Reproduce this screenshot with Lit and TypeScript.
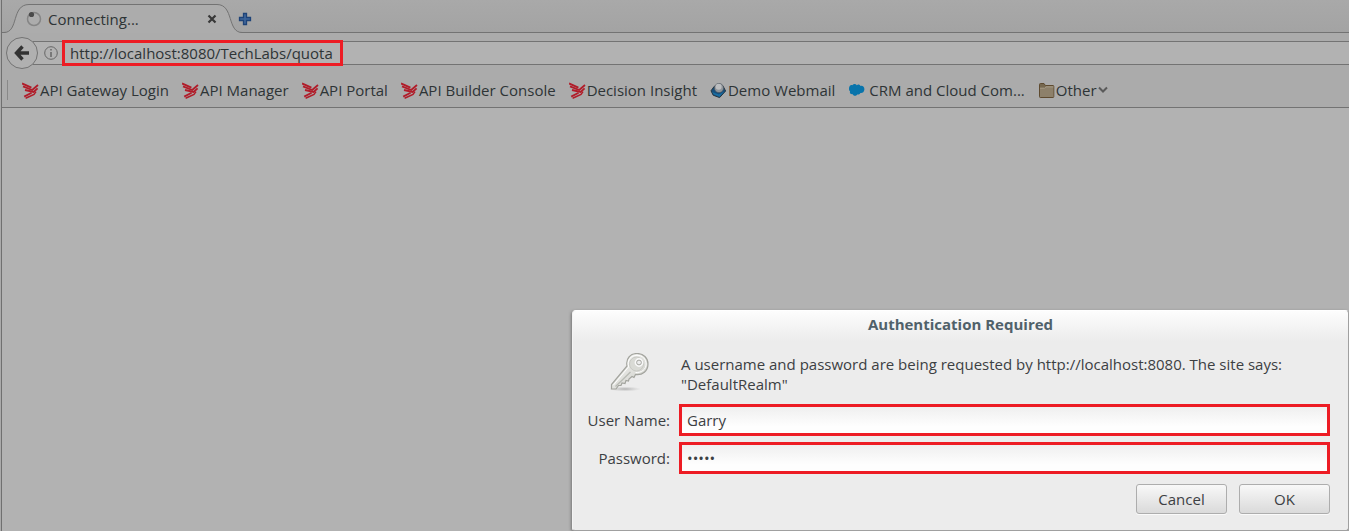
import { LitElement, html, css, svg } from "lit";
import { customElement, property } from "lit/decorators.js";

type IconName = "bird" | "mail" | "cloud" | "folder";

const icons = {
  bird: svg`<g fill="none" stroke="#b11c29" stroke-width="1.8">
      <path d="M0 1.4 L9.4 5.6"/>
      <path d="M1 4.4 L10.2 8 L16 3"/>
      <path d="M3 8 L11.6 10 L15.6 6.4"/>
      <path d="M9.6 10.8 L2.2 14.6"/>
      <path d="M14 9.6 L12 12.4 L3.6 16.2" stroke-width="1.5"/>
    </g>`,
  mail: svg`<path d="M1 8.8 L4.2 4.4 L13 4 L15.6 9 L9.6 15.6 L3.2 13.2 Z" fill="#174f7c" stroke="#26343f"/>
    <path d="M2 10 L8.8 12.6 L14.4 9.4 L9.4 14.8 L3.8 12.6 Z" fill="#1a6ea2"/>
    <circle cx="9" cy="6" r="4.6" fill="#8f9499" stroke="#4b545c" stroke-width=".6"/>
    <circle cx="8.6" cy="4.8" r="3" fill="#bcbec0"/>`,
  cloud: svg`<path d="M1 7.2 C0.8 4.2 2.6 2.6 4.4 3.2 C5.6 1.6 7.8 1.8 8.8 3.2 C10.2 2 11.8 2.6 12.4 4 C14.6 3.4 16.6 5 16.4 7.6 C16.2 10.4 14 11.4 12.4 11 C11.6 12.4 10.2 12.8 9.2 12.4 C8.2 14.4 5.6 14 4.8 12.2 C2.8 12.6 1.4 11 2 9.2 C1.4 8.8 1 8 1 7.2 Z" fill="#0874ab"/>`,
  folder: svg`<path d="M1.5 2.5 Q1.5 1.5 2.5 1.5 H6 L7.4 3.5 H15 Q15.8 3.5 15.8 4.5 V14.5 Q15.8 15.5 15 15.5 H2.3 Q1.5 15.5 1.5 14.5 Z" fill="#76684f" stroke="#5e4a2f"/>
    <path d="M2 6.4 H6.6 L8 4.9 H15.4 V15 H2 Z" fill="#8d806a"/>
    <path d="M2 6.2 H6.6 L8 4.8 H15.4" stroke="#aca08c" fill="none"/>`,
};

@customElement("bookmark-link")
class BookmarkLink extends LitElement {
  @property() icon: IconName = "bird";
  @property() label = "";
  @property({ type: Boolean }) menu = false;

  static styles = css`
    :host { display: block; flex: none; }
    .link { display: flex; align-items: center; gap: 1px; color: inherit; text-decoration: none; white-space: nowrap; }
    .icon { width: 17px; height: 17px; }
    .spaced { gap: 4px; }
    .arrow { width: 10px; height: 8px; }
  `;

  render() {
    return html`<a class="link ${this.icon === "cloud" ? "spaced" : ""}" href="#">
      <svg class="icon" viewBox="0 0 17 17" aria-hidden="true">${icons[this.icon]}</svg>
      <span>${this.label}</span>
      ${this.menu
        ? html`<svg class="arrow" viewBox="0 0 10 8" aria-hidden="true"><path d="M1 1.5 L5 5.5 L9 1.5" fill="none" stroke="#5a5a5a" stroke-width="2"/></svg>`
        : ""}
    </a>`;
  }
}

@customElement("auth-dialog")
class AuthDialog extends LitElement {
  static styles = css`
    :host {
      display: block; box-sizing: border-box; background: #ececec; color: #3c4043;
      border: 1px solid #a0a0a0; border-top-color: #fff; border-left-color: #f4f4f4;
      border-radius: 4px 4px 3px 3px; box-shadow: -1px 1px 3px #777; overflow: hidden;
    }
    .title {
      margin: 0; height: 30px; line-height: 27px; font-size: 15px; font-weight: 700; text-align: center;
      color: #50616a; background: linear-gradient(#fdfdfd, #ececec);
    }
    .form {
      display: grid; grid-template-columns: 97px 1fr; column-gap: 9px;
      padding: 12px 18px 16px 0; margin: 0; align-items: center;
    }
    .key { width: 42px; height: 42px; justify-self: end; align-self: start; margin-right: 19px; }
    .message { margin: 0 0 10px 2px; line-height: 20px; padding-top: 1px; }
    .label { text-align: right; padding-bottom: 6px; }
    .field {
      box-sizing: border-box; width: 100%; height: 32px; padding: 0 5px; margin: 0 0 6px;
      font: inherit; color: inherit; border: 3px solid #ed1c24; border-radius: 0; outline: 0;
      background: linear-gradient(#efefef, #fefefe 75%);
    }
    .actions { grid-column: 1 / -1; display: flex; justify-content: flex-end; gap: 12px; padding-top: 4px; }
    .button {
      width: 91px; height: 30px; padding: 0; font: inherit; color: inherit; border: 1px solid #adadad;
      border-radius: 3px; background: linear-gradient(#f8f8f8, #dadada); box-shadow: 0 1px #fafafa;
    }
  `;

  render() {
    return html`<h1 class="title">Authentication Required</h1>
      <form class="form" @submit=${(e: Event) => e.preventDefault()}>
        <svg class="key" viewBox="0 0 42 42" aria-hidden="true">
          <defs>
            <linearGradient id="metal" x1="0" y1="0" x2="1" y2="1"><stop offset="0" stop-color="#fafaf8"/><stop offset="1" stop-color="#c8c9c3"/></linearGradient>
            <radialGradient id="shade"><stop offset="0" stop-color="#888" stop-opacity=".6"/><stop offset="1" stop-color="#aaa" stop-opacity="0"/></radialGradient>
          </defs>
          <ellipse cx="16" cy="36" rx="16" ry="2.5" fill="url(#shade)"/>
          <path d="M18 13 C16.5 5 22 .5 28 .5 C34.5 .5 39 5 39 11 C39 18 33.5 22.5 26.5 21.5 L25 24.5 L23 23.5 L20 26 L19.5 28 L17 27.5 L16 30.5 L13 30 L12 32.5 L9.5 32.5 L7 36 H2.5 V31.5 Z" fill="url(#metal)" stroke="#a3a49e" stroke-width="1.2"/>
          <path d="M19.7 14 C17.5 7 22 2.3 28 2.3 C33.5 2.3 37.1 6 37.1 11 C37.1 16.5 32.5 20 26.5 19.5 M19.5 14 L4.3 32.2" fill="none" stroke="#fff"/>
          <circle cx="27.5" cy="11" r="7" fill="#d9dad5" stroke="#c8c9c4"/>
          <circle cx="30" cy="9.5" r="3.2" fill="#ececec" stroke="#f8f8f8" stroke-width="2.4"/>
          <circle cx="30" cy="9.5" r="2.4" fill="#ececec" stroke="#a5a6a0"/>
          <path d="M21.5 19 L6.5 33.5" stroke="#b8bab4" stroke-width="1.3"/>
        </svg>
        <p class="message">A username and password are being requested by http://localhost:8080. The site says: "DefaultRealm"</p>
        <label class="label" for="user">User Name:</label>
        <input class="field" id="user" type="text" value="Garry" autocomplete="off" />
        <label class="label" for="pass">Password:</label>
        <input class="field" id="pass" type="password" value="12345" autocomplete="off" />
        <div class="actions">
          <button class="button" type="button">Cancel</button>
          <button class="button" type="submit">OK</button>
        </div>
      </form>`;
  }
}

@customElement("app-root")
class AppRoot extends LitElement {
  static styles = css`
    :host {
      display: flex; flex-direction: column; box-sizing: border-box; min-height: 100vh; position: relative;
      font: 15px/20px "Open Sans", sans-serif; color: #2e3436; background: #b2b2b2;
      border-left: 1px solid #aaa; overflow: hidden;
    }
    .window { flex: 1; display: flex; flex-direction: column; border-left: 1px solid #707070; }
    .tabs { display: flex; height: 33px; background: linear-gradient(#a9a9a9, #a3a3a3); box-shadow: inset 0 -1px #737373; }
    .tab { display: grid; grid-template-columns: 236px; width: 236px; }
    .shape { grid-area: 1 / 1; width: 244px; height: 33px; }
    .tab-content { grid-area: 1 / 1; display: flex; align-items: center; gap: 6px; padding: 5px 21px 0 24px; }
    .spinner { width: 16px; height: 16px; }
    .tab-title { flex: 1; }
    .icon-button { display: flex; padding: 0; border: 0; background: none; }
    .new-tab { align-self: center; padding-top: 5px; }
    .nav { display: flex; align-items: center; height: 40px; padding-left: 4px; background: #ababab; }
    .back { flex: none; z-index: 1; width: 32px; height: 32px; padding: 0; border: 1px solid #737373; border-radius: 50%; background: #b0b0b0; display: grid; place-items: center; }
    .address { flex: 1; display: flex; align-items: center; gap: 4px; height: 22px; margin-left: -5px; padding-left: 11px; border: solid #737373; border-width: 1px 0; background: #b2b2b2; }
    .url { box-sizing: border-box; width: 281px; height: 26px; padding: 0 5px; font: inherit; color: inherit; border: 3px solid #ed1c24; background: #b2b2b2; outline: 0; }
    .bookmarks { display: flex; align-items: center; gap: 13px; height: 34px; padding-left: 5px; background: #ababab; border-bottom: 1px solid #737373; }
    .divider { width: 1px; height: 20px; background: #888; margin-right: 1px; }
    .page { flex: 1; }
    .dialog { position: absolute; right: 0; bottom: 0; width: 777px; max-width: 100%; }
  `;

  private links: { icon: IconName; label: string; menu?: boolean }[] = [
    { icon: "bird", label: "API Gateway Login" },
    { icon: "bird", label: "API Manager" },
    { icon: "bird", label: "API Portal" },
    { icon: "bird", label: "API Builder Console" },
    { icon: "bird", label: "Decision Insight" },
    { icon: "mail", label: "Demo Webmail" },
    { icon: "cloud", label: "CRM and Cloud Com..." },
    { icon: "folder", label: "Other", menu: true },
  ];

  render() {
    return html`<div class="window">
        <header class="tabs">
          <div class="tab">
            <svg class="shape" viewBox="0 0 244 33" aria-hidden="true">
              <path d="M0 32.5 H2 C17 32.5 9 4.5 27 4.5 H215 C232 4.5 225 32.5 240 32.5 H244 V33 H0 Z" fill="#acacac"/>
              <path d="M0 32.5 H2 C17 32.5 9 4.5 27 4.5 H215 C232 4.5 225 32.5 240 32.5 H244" fill="none" stroke="#737373"/>
            </svg>
            <div class="tab-content">
              <svg class="spinner" viewBox="0 0 16 16" aria-hidden="true">
                <circle cx="8" cy="8" r="6.5" fill="none" stroke="#858585" stroke-width="1.5"/>
                <circle cx="5.5" cy="3.5" r="2.6" fill="#4a4a4a"/>
              </svg>
              <span class="tab-title">Connecting...</span>
              <button class="icon-button" aria-label="Close tab">
                <svg width="10" height="10" viewBox="0 0 10 10"><path d="M1.5 1.5 L8.5 8.5 M8.5 1.5 L1.5 8.5" stroke="#383838" stroke-width="2.2"/></svg>
              </button>
            </div>
          </div>
          <button class="icon-button new-tab" aria-label="New tab">
            <svg width="14" height="14" viewBox="0 0 14 14"><path d="M5.5 1.5 H8.5 V5.5 H12.5 V8.5 H8.5 V12.5 H5.5 V8.5 H1.5 V5.5 H5.5 Z" fill="#3f669a" stroke="#1e4378" stroke-width="1.3"/></svg>
          </button>
        </header>
        <nav class="nav">
          <button class="back" aria-label="Back">
            <svg width="16" height="16" viewBox="0 0 16 16"><path d="M8.5 1.5 L2.5 8 L8.5 14.5 M3 8 H15" fill="none" stroke="#333" stroke-width="3.4"/></svg>
          </button>
          <div class="address">
            <svg width="14" height="14" viewBox="0 0 14 14" aria-hidden="true"><circle cx="7" cy="7" r="6.3" fill="none" stroke="#666"/><path d="M7 3 V4.6 M7 6 V11" stroke="#666" stroke-width="1.5"/></svg>
            <input class="url" type="text" aria-label="Address" value="http://localhost:8080/TechLabs/quota" />
          </div>
        </nav>
        <nav class="bookmarks">
          <span class="divider"></span>
          ${this.links.map((l) => html`<bookmark-link .icon=${l.icon} .label=${l.label} .menu=${!!l.menu}></bookmark-link>`)}
        </nav>
        <main class="page"></main>
      </div>
      <auth-dialog class="dialog" role="dialog" aria-label="Authentication Required"></auth-dialog>`;
  }
}
